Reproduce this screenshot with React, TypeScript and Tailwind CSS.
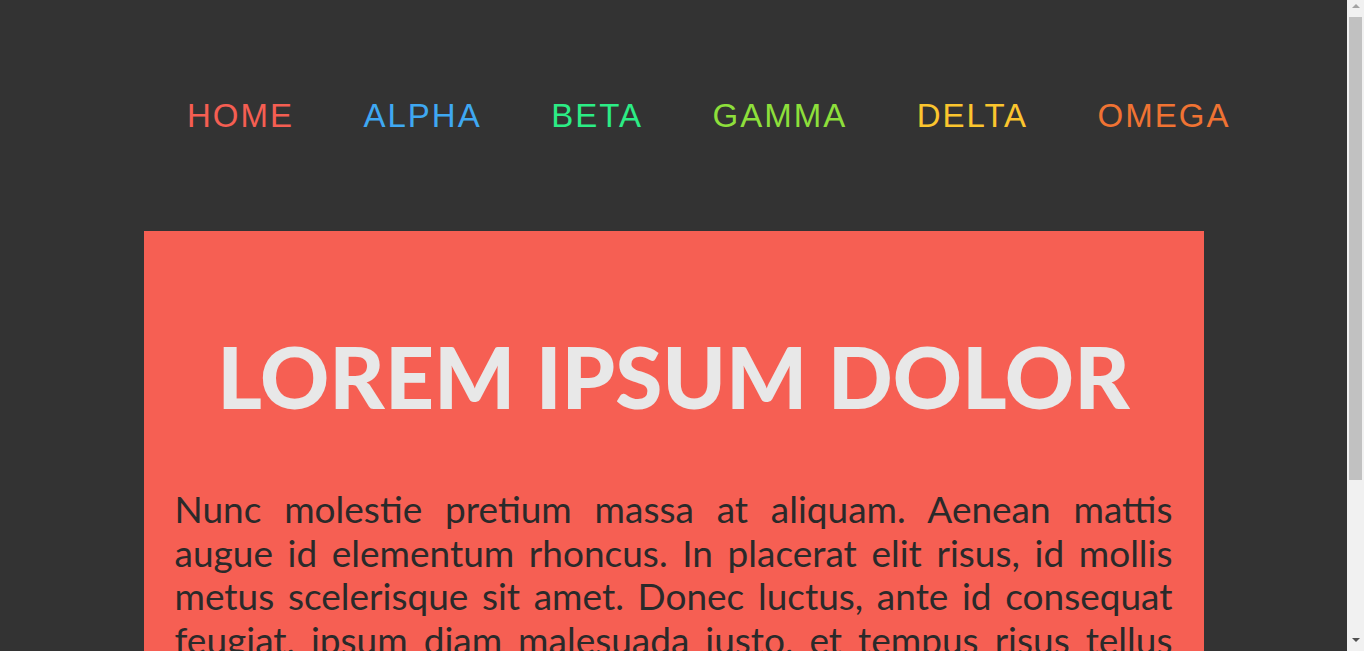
import { FC } from "react";

const links = [
  { label: "HOME", color: "text-[#f55e52]" },
  { label: "ALPHA", color: "text-[#3fa8f2]" },
  { label: "BETA", color: "text-[#2cec85]" },
  { label: "GAMMA", color: "text-[#8ddf3b]" },
  { label: "DELTA", color: "text-[#fbc52e]" },
  { label: "OMEGA", color: "text-[#f07333]" },
];

const lines = [
  "Nunc molestie pretium massa at aliquam. Aenean mattis",
  "augue id elementum rhoncus. In placerat elit risus, id mollis",
  "metus scelerisque sit amet. Donec luctus, ante id consequat",
  "feugiat, ipsum diam malesuada justo, et tempus risus tellus",
];

const Scrollbar: FC = () => (
  <div className="flex h-full w-[17px] shrink-0 flex-col items-center bg-[#f1f1f1]">
    <div className="mt-[4px] h-0 w-0 border-x-[4px] border-b-[4px] border-x-transparent border-b-[#a3a3a3]" />
    <div className="mt-[9px] h-[463px] w-[13px] bg-[#c1c1c1]" />
    <div className="mt-auto mb-[9px] h-0 w-0 border-x-[4px] border-t-[4px] border-x-transparent border-t-[#505050]" />
  </div>
);

const App: FC = () => {
  return (
    <div className="flex h-[651px] overflow-hidden bg-white">
      <div className="h-full w-[1347px] shrink-0 overflow-y-auto bg-[#333333] [scrollbar-width:none]">
        <div className="min-h-[855px] pb-[30px]">
          <nav className="flex gap-[69.5px] pl-[187px] pt-[91px]">
            {links.map((link) => (
              <a
                key={link.label}
                href="#"
                className={`font-['Liberation_Sans',Arial,sans-serif] text-[33px] tracking-[2px] ${link.color}`}
              >
                {link.label}
              </a>
            ))}
          </nav>

          <main className="mx-auto mt-[90px] w-[1060px] bg-[#f65f53] px-[31px] pb-[40px] pt-[103px]">
            <h1 className="whitespace-nowrap text-center font-['Lato',sans-serif] text-[85.5px] font-black leading-none text-[#e8e8e8]">
              LOREM IPSUM DOLOR
            </h1>

            <div className="mt-[68px] font-['Lato',sans-serif] text-[37px] leading-[43.5px] text-[#2a2a2a]">
              {lines.map((line) => (
                <span
                  key={line}
                  className="block whitespace-nowrap text-justify [text-align-last:justify]"
                >
                  {line}
                </span>
              ))}
              <p className="text-justify">
                vel nisi. Praesent vitae lacus non turpis faucibus dictum. Sed
                ultrices, magna at aliquet volutpat, lorem lectus tincidunt
                arcu, sit amet cursus nisl eros vitae mauris.
              </p>
            </div>
          </main>
        </div>
      </div>
      <Scrollbar />
    </div>
  );
};

export default App;
